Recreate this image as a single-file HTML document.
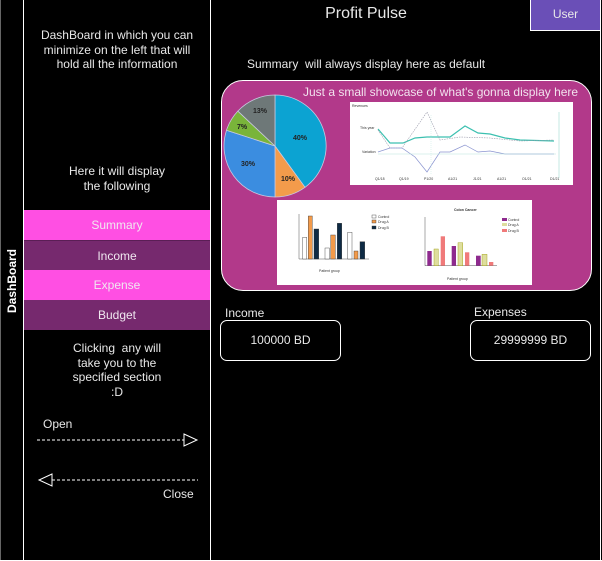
<!DOCTYPE html>
<html><head><meta charset="utf-8"><style>
*{margin:0;padding:0;box-sizing:border-box}
body{width:602px;height:561px;background:#000;position:relative;overflow:hidden;font-family:"Liberation Sans",sans-serif;color:#e8e8e8;font-size:12px}
.a{position:absolute}
.t{position:absolute;text-align:center;line-height:14.5px}
.vl{position:absolute;top:0;width:1px;background:#fff}
.nav{position:absolute;left:24px;width:186px;height:30px;line-height:30px;text-align:center;color:#f0e8f0;font-size:12px}
.box{position:absolute;border:1px solid #fff;border-radius:7px;height:41px;line-height:39px;text-align:center;font-size:12px}
</style></head><body>
<div class="vl" style="left:0;height:561px;background:#666"></div>
<div class="vl" style="left:23px;height:561px"></div>
<div class="vl" style="left:210px;height:561px"></div>
<div class="vl" style="left:600px;height:561px"></div>
<div class="a" style="left:0;top:560px;width:602px;height:1px;background:#fff"></div>

<div class="a" style="left:-20px;top:274px;width:64px;text-align:center;transform:rotate(-90deg);font-weight:bold;font-size:12px;color:#fff">DashBoard</div>

<div class="t" style="left:24px;top:28px;width:186px">DashBoard in which you can<br>minimize on the left that will<br>hold all the information</div>
<div class="t" style="left:24px;top:164px;width:186px">Here it will display<br>the following</div>

<div class="nav" style="top:210px;background:#ff4fe3">Summary</div>
<div class="nav" style="top:240px;background:#76296e;border-top:1px solid #5a1e55">Income</div>
<div class="nav" style="top:270px;background:#ff4fe3">Expense</div>
<div class="nav" style="top:300px;background:#76296e">Budget</div>

<div class="t" style="left:24px;top:341px;width:186px">Clicking &nbsp;any will<br>take you to the<br>specified section<br>:D</div>

<div class="a" style="left:43px;top:417px">Open</div>
<svg class="a" style="left:0;top:0" width="210" height="561">
<line x1="37" y1="440" x2="184" y2="440" stroke="#fff" stroke-dasharray="3,2"/>
<polygon points="184,434 197,440 184,446" fill="none" stroke="#fff"/>
<line x1="52" y1="480" x2="198" y2="480" stroke="#fff" stroke-dasharray="3,2"/>
<polygon points="52,474 39,480 52,486" fill="none" stroke="#fff"/>
</svg>
<div class="a" style="left:163px;top:487px">Close</div>

<div class="a" style="left:211px;top:5px;width:310px;text-align:center;font-size:16px">Profit Pulse</div>
<div class="a" style="left:530px;top:0;width:71px;height:31px;background:#6a4fb7;border:1px solid #fff;border-top:none;text-align:center;line-height:29px;font-size:12px">User</div>
<div class="a" style="left:247px;top:57px">Summary &nbsp;will always display here as default</div>

<div class="a" style="left:221px;top:80px;width:371px;height:211px;background:#b2398a;border:1px solid #fff;border-radius:22px"></div>
<div class="a" style="left:303px;top:85px;font-size:12px;color:#f2e2ee">Just a small showcase of what's gonna display here</div>

<svg class="a" style="left:0;top:0" width="602" height="300">
<g stroke="#c8c8e0" stroke-width="0.8">
<path d="M275,146 L275,95 A51,51 0 0 1 305,187.3 Z" fill="#0ca3d2"/>
<path d="M275,146 L305,187.3 A51,51 0 0 1 275,197 Z" fill="#f39b4b"/>
<path d="M275,146 L275,197 A51,51 0 0 1 226.5,130.2 Z" fill="#3b8de0"/>
<path d="M275,146 L226.5,130.2 A51,51 0 0 1 237.8,111.1 Z" fill="#79b43a"/>
<path d="M275,146 L237.8,111.1 A51,51 0 0 1 275,95 Z" fill="#6e7878"/>
</g>
<g font-size="7" font-weight="bold" fill="#222" font-family="Liberation Sans">
<text x="293" y="140">40%</text><text x="281" y="181">10%</text>
<text x="241" y="166">30%</text><text x="237" y="129">7%</text><text x="253" y="113">13%</text>
</g>
<rect x="350" y="102" width="223" height="83" fill="#fff"/>
<g font-size="3.5" fill="#333" font-family="Liberation Sans"><text x="352" y="107">Revenues</text><text x="360" y="129">This year</text><text x="362" y="153">Variation</text>
<text x="375" y="180">Q1/18</text><text x="399" y="180">Q1/19</text><text x="424" y="180">P1/20</text><text x="448" y="180">A1/21</text><text x="473" y="180">J1/21</text><text x="497" y="180">A1/21</text><text x="522" y="180">O1/21</text><text x="550" y="180">D1/21</text></g>
<polyline points="378,129 390,143 403,143 415,138 427,137 450,137 465,126 478,133 490,134 505,138 520,140 554,141" fill="none" stroke="#3cc0b0" stroke-width="1.2"/>
<polyline points="378,130 390,148 402,148 427,112 440,140 460,137 490,138 520,141 554,140" fill="none" stroke="#99a" stroke-width="0.6" stroke-dasharray="1.5,1"/>
<polyline points="378,152 390,148 402,148 415,157 427,172 440,152 450,152 465,145 478,152 490,151 505,154 554,154" fill="none" stroke="#8a94d0" stroke-width="0.7"/>
<line x1="378" y1="154" x2="556" y2="154" stroke="#b7e6dd" stroke-width="0.6"/>
<line x1="431" y1="115" x2="431" y2="175" stroke="#b7e6dd" stroke-width="0.4" stroke-dasharray="1,1"/>
<line x1="559" y1="112" x2="559" y2="178" stroke="#9edcd0" stroke-width="0.6"/>
<g transform="translate(277,200)">
<rect width="255" height="85" fill="#fff"/>
<line x1="22" y1="14" x2="22" y2="59" stroke="#555" stroke-width="0.5"/><line x1="22" y1="59" x2="92" y2="59" stroke="#555" stroke-width="0.5"/>
<g stroke="#333" stroke-width="0.4">
<rect x="25.7" y="37.3" width="4" height="21.7" fill="#fff"/><rect x="31.3" y="16" width="4" height="43" fill="#f29a4a"/><rect x="37" y="29" width="4.7" height="30" fill="#0e2a44"/>
<rect x="48" y="48" width="4.3" height="11" fill="#fff"/><rect x="53.7" y="35" width="4.6" height="24" fill="#f29a4a"/><rect x="60.3" y="23.3" width="4.4" height="35.7" fill="#0e2a44"/>
<rect x="70.7" y="32.3" width="4.3" height="26.7" fill="#fff"/><rect x="77" y="51" width="4" height="8" fill="#f29a4a"/><rect x="83" y="41.7" width="4.7" height="17.3" fill="#0e2a44"/>
<rect x="95" y="15" width="4" height="3" fill="#fff"/><rect x="95" y="20" width="4" height="3" fill="#f29a4a"/><rect x="95" y="26" width="4" height="3" fill="#0e2a44"/>
</g>
<line x1="148" y1="17" x2="148" y2="65.7" stroke="#555" stroke-width="0.5"/><line x1="148" y1="65.7" x2="220" y2="65.7" stroke="#555" stroke-width="0.5"/>
<rect x="150.3" y="51" width="4.4" height="14.7" fill="#8e2a8e"/><rect x="157" y="49" width="4.3" height="16.7" fill="#dede9e" stroke="#990" stroke-width="0.4"/><rect x="163.7" y="36.3" width="4.3" height="29.4" fill="#f07a7a"/>
<rect x="174.7" y="46" width="4.3" height="19.7" fill="#8e2a8e"/><rect x="181" y="42.7" width="4.7" height="23" fill="#dede9e" stroke="#990" stroke-width="0.4"/><rect x="188" y="52.3" width="4.3" height="13.4" fill="#f07a7a"/>
<rect x="199" y="55.7" width="4.7" height="10" fill="#8e2a8e"/><rect x="205" y="54.3" width="5" height="11.4" fill="#dede9e" stroke="#990" stroke-width="0.4"/><rect x="212" y="62" width="4.3" height="3.7" fill="#f07a7a"/>
<rect x="225" y="18" width="5" height="3" fill="#8e2a8e"/><rect x="225" y="23" width="5" height="3" fill="#dede9e"/><rect x="225" y="29" width="5" height="3" fill="#f07a7a"/>
<g font-size="3.5" fill="#333" font-family="Liberation Sans">
<text x="101" y="18">Control</text><text x="101" y="23">Drug A</text><text x="101" y="29">Drug B</text>
<text x="231" y="21">Control</text><text x="231" y="26">Drug A</text><text x="231" y="32">Drug B</text>
<text x="177" y="11" font-weight="bold">Colon Cancer</text>
<text x="42" y="72">Patient group</text><text x="170" y="80">Patient group</text>
</g>
</g>
</svg>

<div class="a" style="left:225px;top:306px">Income</div>
<div class="box" style="left:220px;top:320px;width:121px">100000 BD</div>
<div class="a" style="left:474px;top:305px">Expenses</div>
<div class="box" style="left:470px;top:320px;width:121px">29999999 BD</div>
</body></html>
